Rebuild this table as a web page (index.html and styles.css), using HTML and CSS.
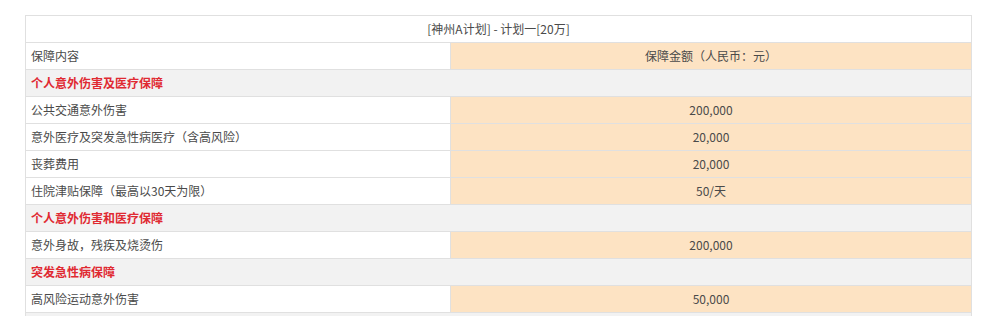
FILE: index.html
```html
<!DOCTYPE html>
<html lang="zh-CN">
<head>
<meta charset="utf-8">
<title>保障计划</title>
<link rel="stylesheet" href="styles.css">
</head>
<body>
<div class="page">
<table class="plan">
  <colgroup><col class="c-name"><col class="c-amount"></colgroup>
  <tr class="title"><td colspan="2">[神州A计划] - 计划一[20万]</td></tr>
  <tr><td>保障内容</td><td class="amt">保障金额（人民币：元）</td></tr>
  <tr class="sec"><td colspan="2">个人意外伤害及医疗保障</td></tr>
  <tr><td>公共交通意外伤害</td><td class="amt">200,000</td></tr>
  <tr><td>意外医疗及突发急性病医疗（含高风险）</td><td class="amt">20,000</td></tr>
  <tr><td>丧葬费用</td><td class="amt">20,000</td></tr>
  <tr><td>住院津贴保障（最高以30天为限）</td><td class="amt">50/天</td></tr>
  <tr class="sec"><td colspan="2">个人意外伤害和医疗保障</td></tr>
  <tr><td>意外身故，残疾及烧烫伤</td><td class="amt">200,000</td></tr>
  <tr class="sec"><td colspan="2">突发急性病保障</td></tr>
  <tr><td>高风险运动意外伤害</td><td class="amt">50,000</td></tr>
  <tr class="sec"><td colspan="2">&nbsp;</td></tr>
</table>
</div>
</body>
</html>
```
FILE: styles.css
```css
html, body { margin: 0; padding: 0; background: #fff; }
.page { padding: 15px 11px 0 25px; }
.plan {
  width: 946px;
  border-collapse: collapse;
  table-layout: fixed;
  font-family: "Microsoft YaHei", "Noto Sans CJK SC", "Noto Sans", sans-serif;
  font-size: 12px;
  color: #4a4a4a;
}
.c-name { width: 425px; }
.c-amount { width: 521px; }
.plan td {
  border: 1px solid #e0e0e0;
  height: 26px;
  padding: 0 5px;
  line-height: 26px;
  box-sizing: border-box;
  white-space: nowrap;
}
.plan tr { height: 27px; }
.title td { text-align: center; background: #fff; }
.amt { background: #fde3c3; text-align: center; }
.sec td { background: #f2f2f2; color: #e02a32; font-weight: bold; }
```
